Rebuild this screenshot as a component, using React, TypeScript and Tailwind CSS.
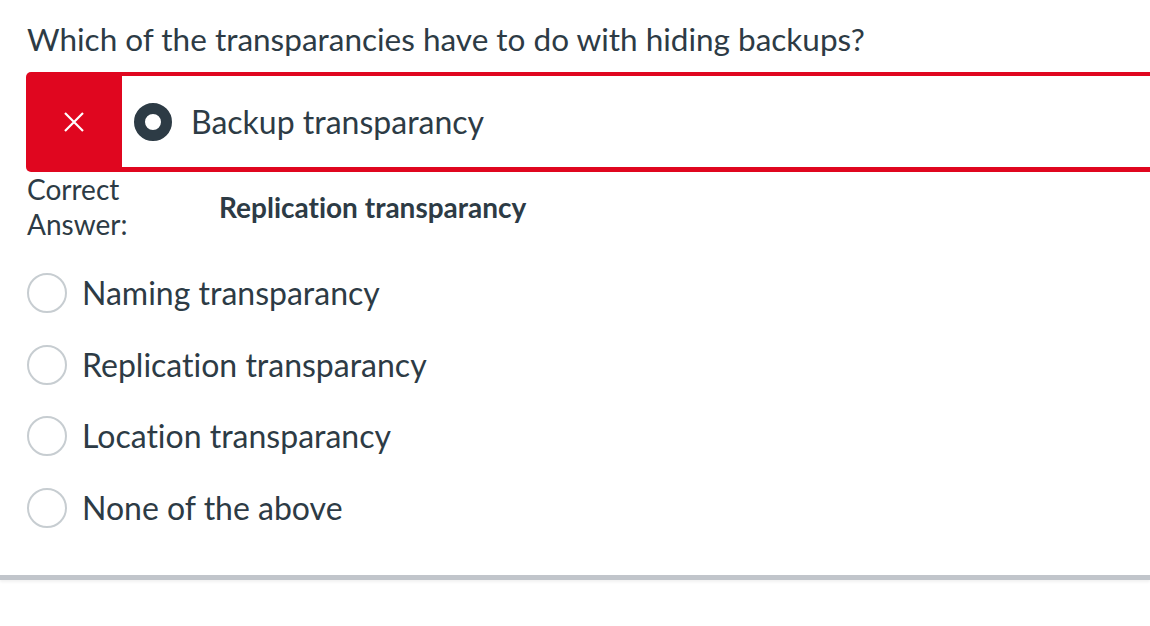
import React from 'react';

const options = [
  'Naming transparancy',
  'Replication transparancy',
  'Location transparancy',
  'None of the above',
];

export default function App() {
  return (
    <div className="w-[1150px] h-[626px] bg-white overflow-hidden font-['Lato',sans-serif] text-[#2d3b45] [font-variant-ligatures:none]">
      {/* Question */}
      <div className="pl-[27px] pt-[18px] text-[31.5px] leading-[42px]">
        Which of the transparancies have to do with hiding backups?
      </div>

      {/* Selected (wrong) answer */}
      <div className="mt-[12px] ml-[26px] w-[1140px] h-[100px] flex bg-[#e0061f] rounded-l-[5px]">
        <div className="w-[96px] flex items-center justify-center">
          <svg width="22" height="22" viewBox="0 0 22 22" fill="none" stroke="white" strokeWidth="2.2">
            <path d="M2 2 L20 20 M20 2 L2 20" />
          </svg>
        </div>
        <div className="flex-1 bg-white mt-[4px] mb-[5px] flex items-center pl-[12px] gap-[19px]">
          <div className="w-[38px] h-[38px] rounded-full border-[11px] border-[#2d3b45]" />
          <span className="text-[32px] leading-none">Backup transparancy</span>
        </div>
      </div>

      {/* Correct answer */}
      <div className="flex items-center pl-[27px]">
        <div className="w-[192px] text-[28px] leading-[35px]">
          Correct
          <br />
          Answer:
        </div>
        <div className="text-[28px] font-bold">Replication transparancy</div>
      </div>

      {/* Other options */}
      <div className="flex flex-col gap-[31.5px] pl-[27px] mt-[31px]">
        {options.map((o) => (
          <div key={o} className="flex items-center gap-[15px] h-[40px]">
            <div className="w-[40px] h-[40px] rounded-full border-2 border-[#c7cdd1]" />
            <span className="text-[32px] leading-none">{o}</span>
          </div>
        ))}
      </div>

      <div className="mt-[47px] h-[5px] bg-[#c1c5cb] shadow-[0_2px_3px_rgba(0,0,0,0.06)]" />
    </div>
  );
}
